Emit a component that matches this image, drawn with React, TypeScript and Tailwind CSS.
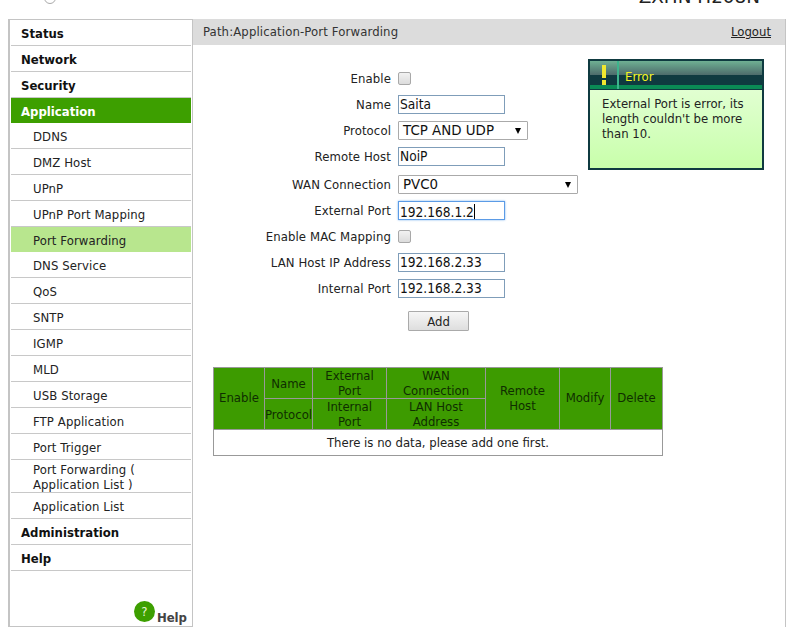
import React from "react";

const top = ["Status", "Network", "Security"];
const subs = ["DDNS", "DMZ Host", "UPnP", "UPnP Port Mapping", "Port Forwarding", "DNS Service", "QoS", "SNTP", "IGMP", "MLD", "USB Storage", "FTP Application", "Port Trigger"];

function TopItem({ label }: { label: string }) {
  return (
    <div className="h-[26px] border-b border-[#c8c8c8] pl-[10px] font-bold text-[13px] leading-[28px] text-[#111]">{label}</div>
  );
}

function SubItem({ label, active }: { label: string; active?: boolean }) {
  return (
    <div className={`pl-[22px] text-[13px] leading-[28px] tracking-[0.1px] text-[#222] ${active ? "h-[25px] bg-[#b8e68e]" : "h-[26px] border-b border-[#c8c8c8]"}`}>{label}</div>
  );
}

function Row({ label, offset, children }: { label: string; offset: string; children: React.ReactNode }) {
  return (
    <div className="flex h-[26px] items-start">
      <div className="w-[205px] pr-[7px] text-right text-[13px] leading-[28px] tracking-[0.1px] text-[#222]">{label}</div>
      <div className={offset}>{children}</div>
    </div>
  );
}

function Field({ value, focus }: { value: string; focus?: boolean }) {
  return (
    <div className={`relative h-[19px] w-[107px] border bg-white pl-[1px] text-[13.6px] leading-[17px] text-[#111] ${focus ? "border-[#5b9be6] shadow-[0_0_2px_#7db3ee]" : "border-[#7f9db9]"}`}>
      {value}
      {focus && <span className="inline-block h-[15px] w-px translate-y-[2px] bg-black" />}
    </div>
  );
}

function Check() {
  return <div className="h-[13px] w-[13px] rounded-[2px] border border-[#a8a8a8] bg-gradient-to-b from-[#f2f2f2] to-[#dcdcdc]" />;
}

function Select({ value, width }: { value: string; width: string }) {
  return (
    <div className={`flex h-[19px] items-center justify-between rounded-[1px] border border-[#aaa] bg-white pl-[4px] pr-[6px] font-['DejaVu_Sans'] text-[13.4px] text-[#111] ${width}`}>
      <span className="translate-y-[1px]">{value}</span>
      <span className="h-0 w-0 border-x-[3.5px] border-t-[6px] border-x-transparent border-t-black" />
    </div>
  );
}

export default function App() {
  const th = "border border-[#999] bg-[#3d9b00] p-0 font-normal text-[13px] leading-[15px] text-[#0f2e00] text-center align-middle";
  const thSpan = "border border-[#999] bg-[#3d9b00] p-0 pb-[2px] font-normal text-[13px] leading-[15px] text-[#0f2e00] text-center align-middle";
  return (
    <div className="h-[627px] w-[809px] overflow-hidden bg-white font-['DejaVu_Sans_Condensed','DejaVu_Sans',sans-serif]">
      <div className="relative h-[19px] overflow-hidden">
        <div className="absolute left-[44px] top-[-8px] h-[12px] w-[12px] rounded-full border border-[#aaa]" />
        <div className="absolute right-[49px] bottom-[13px] font-['DejaVu_Sans'] text-[18.4px] leading-none text-[#222]">ZXHN H208N</div>
      </div>
      <div className="ml-[8px] flex h-[608px] w-[778px] border-r border-[#c4c4c4]">
        <aside className="flex w-[185px] shrink-0 flex-col border-y border-r border-l-2 border-[#c4c4c4] pl-[1px] pr-[1px]">
          <div className="flex-1">
            {top.map((t) => <TopItem key={t} label={t} />)}
            <div className="h-[25px] bg-[#3d9f00] pl-[10px] font-bold text-[13px] leading-[28px] text-white">Application</div>
            {subs.map((s) => <SubItem key={s} label={s} active={s === "Port Forwarding"} />)}
            <div className="h-[33px] border-b border-[#c8c8c8] pl-[22px] pt-[2px] text-[13px] leading-[15px] tracking-[0.1px] text-[#222]">
              Port Forwarding (<br />Application List )
            </div>
            <SubItem label="Application List" />
            <TopItem label="Administration" />
            <TopItem label="Help" />
          </div>
          <div className="flex items-end justify-end pr-[4px]">
            <div className="mb-[4px] flex h-[21px] w-[21px] items-center justify-center rounded-full bg-[#3d9f00] text-[13px] text-[#e8f5d8]">?</div>
            <span className="ml-[2px] text-[13px] font-bold leading-[17px] text-[#444]">Help</span>
          </div>
        </aside>
        <main className="min-w-0 flex-1">
          <div className="flex h-[26px] items-center justify-between bg-[#dcdcdc] pl-[10px] pr-[14px] text-[13px] text-[#333]">
            <span className="tracking-[0.13px]">Path:Application-Port Forwarding</span>
            <span className="underline text-[#222]">Logout</span>
          </div>
          <div className="relative">
            <div className="absolute left-[395px] top-[14px] h-[111px] w-[176px] border-2 border-[#0f3a40] bg-gradient-to-b from-[#eaffdf] to-[#c8ffaa]">
              <div className="flex h-[29px] border-b border-[#0f3a40] bg-[linear-gradient(#6fb093_0%,#4d6b6b_50%,#0f3a40_50%,#0f3a40_86%,#0a8a55_86%)]">
                <div className="flex w-[29px] flex-col items-center gap-[2px] border-r-2 border-[#3db58d] pt-[4px]">
                  <div className="h-[13px] w-[4px] bg-[#f0e830]" />
                  <div className="h-[5px] w-[4px] bg-[#f0e830]" />
                </div>
                <div className="pl-[6px] pt-[8px] text-[13px] leading-[15px] text-[#f5f520]">Error</div>
              </div>
              <div className="px-[12px] pt-[6px] text-[13px] leading-[15px] text-[#222]">
                External Port is error, its length couldn't be more than 10.
              </div>
            </div>
            <div className="pt-[20px]">
              <Row label="Enable" offset="pt-[7px]"><Check /></Row>
              <Row label="Name" offset="pt-[4px]"><Field value="Saita" /></Row>
              <Row label="Protocol" offset="pt-[4px]"><Select value="TCP AND UDP" width="w-[130px]" /></Row>
              <Row label="Remote Host" offset="pt-[4px]"><Field value="NoiP" /></Row>
              <div className="h-[2px]" />
              <Row label="WAN Connection" offset="pt-[4px]"><Select value="PVC0" width="w-[180px]" /></Row>
              <Row label="External Port" offset="pt-[4px]"><Field value="192.168.1.2" focus /></Row>
              <Row label="Enable MAC Mapping" offset="pt-[7px]"><Check /></Row>
              <Row label="LAN Host IP Address" offset="pt-[4px]"><Field value="192.168.2.33" /></Row>
              <Row label="Internal Port" offset="pt-[4px]"><Field value="192.168.2.33" /></Row>
            </div>
            <div className="ml-[215px] mt-[10px] flex h-[20px] w-[61px] items-center justify-center rounded-[1px] border border-[#aaa] bg-gradient-to-b from-[#f6f6f6] to-[#dedede] pt-[1px] text-[13px] text-[#222]">Add</div>
            <table className="ml-[20px] mt-[36px] w-[450px] table-fixed border-collapse border border-[#999]">
              <colgroup>
                <col className="w-[51px]" />
                <col className="w-[48px]" />
                <col className="w-[74px]" />
                <col className="w-[99px]" />
                <col className="w-[74px]" />
                <col className="w-[51px]" />
                <col className="w-[52px]" />
              </colgroup>
              <tbody>
                <tr className="h-[31px]">
                  <td rowSpan={2} className={thSpan}>Enable</td>
                  <td className={th}>Name</td>
                  <td className={th}>External<br />Port</td>
                  <td className={th}>WAN<br />Connection</td>
                  <td rowSpan={2} className={thSpan}>Remote<br />Host</td>
                  <td rowSpan={2} className={thSpan}>Modify</td>
                  <td rowSpan={2} className={thSpan}>Delete</td>
                </tr>
                <tr className="h-[31px]">
                  <td className={th}>Protocol</td>
                  <td className={th}>Internal<br />Port</td>
                  <td className={th}>LAN Host<br />Address</td>
                </tr>
                <tr className="h-[26px]">
                  <td colSpan={7} className="p-0 text-center text-[13px] text-[#222]">There is no data, please add one first.</td>
                </tr>
              </tbody>
            </table>
          </div>
        </main>
      </div>
    </div>
  );
}
